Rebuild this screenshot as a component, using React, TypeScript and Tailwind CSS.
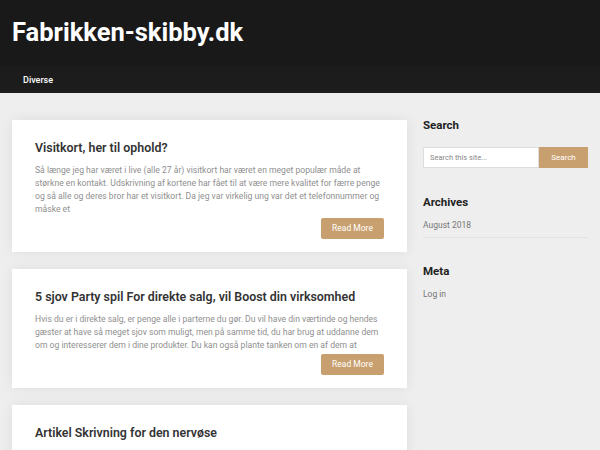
export default function App() {
  const posts = [
    {
      title: 'Visitkort, her til ophold?',
      text: 'Så længe jeg har været i live (alle 27 år) visitkort har været en meget populær måde at størkne en kontakt. Udskrivning af kortene har fået til at være mere kvalitet for færre penge og så alle og deres bror har et visitkort. Da jeg var virkelig ung var det et telefonnummer og måske et',
    },
    {
      title: '5 sjov Party spil For direkte salg, vil Boost din virksomhed',
      text: 'Hvis du er i direkte salg, er penge alle i parterne du gør. Du vil have din værtinde og hendes gæster at have så meget sjov som muligt, men på samme tid, du har brug at uddanne dem om og interesserer dem i dine produkter. Du kan også plante tanken om en af dem at',
    },
    {
      title: 'Artikel Skrivning for den nervøse',
      text: 'Mange mennesker er bange for at skrive. De tror, at de ikke kan skrive godt nok, eller at ingen vil læse det de skriver.',
    },
  ];

  return (
    <div className="min-h-screen bg-[#eeeeee] font-['Roboto',sans-serif]">
      <header className="bg-[#191919]">
        <div className="h-[66px] px-3 pt-[14px]">
          <h1 className="text-[25.5px] font-bold leading-[36px] text-white">Fabrikken-skibby.dk</h1>
        </div>
        <nav className="h-[27px] bg-[#1c1c1c] px-[23px] flex items-center pt-[2px]">
          <a className="text-[9px] font-medium text-white">Diverse</a>
        </nav>
      </header>

      <div className="flex gap-4 px-3 pt-[27px]">
        <main className="w-[395px] flex flex-col gap-[17px]">
          {posts.map((post, idx) => (
            <article
              key={idx}
              className="bg-white px-[23px] pt-[19px] pb-[13px] shadow-[0_0_12px_rgba(0,0,0,0.07)]"
            >
              <h2 className="text-[12.4px] font-semibold leading-[18px] text-[#333333] mb-[7px]">{post.title}</h2>
              <p className="text-[8.6px] leading-[13px] text-[#8f8f8f]">{post.text}</p>
              <div className="flex justify-end mt-[2px]">
                <button className="w-[63px] h-[21px] rounded-[2px] bg-[#c89f6e] text-[8.5px] text-white">
                  Read More
                </button>
              </div>
            </article>
          ))}
        </main>

        <aside className="w-[165px] text-[#222222]">
          <section>
            <h3 className="text-[11.5px] font-bold leading-[14px] -mt-[2px]">Search</h3>
            <div className="flex mt-[15px]">
              <input
                type="text"
                placeholder="Search this site..."
                className="w-[116px] h-[21px] bg-white border border-[#dddddd] px-[6px] text-[7.5px] text-[#555] placeholder:text-[#888888] outline-none"
              />
              <button className="w-[49px] h-[21px] bg-[#c89f6e] text-[8px] text-white">Search</button>
            </div>
          </section>

          <section className="mt-[27px]">
            <h3 className="text-[11.5px] font-bold leading-[14px]">Archives</h3>
            <div className="mt-[10px] pb-[6px] border-b border-[#e2e2e2] text-[8.5px] leading-[12px] text-[#777777]">
              August 2018
            </div>
          </section>

          <section className="mt-[26px]">
            <h3 className="text-[11.5px] font-bold leading-[14px]">Meta</h3>
            <div className="mt-[10px] pb-[6px] text-[8.5px] leading-[12px] text-[#777777]">Log in</div>
          </section>
        </aside>
      </div>
    </div>
  );
}
